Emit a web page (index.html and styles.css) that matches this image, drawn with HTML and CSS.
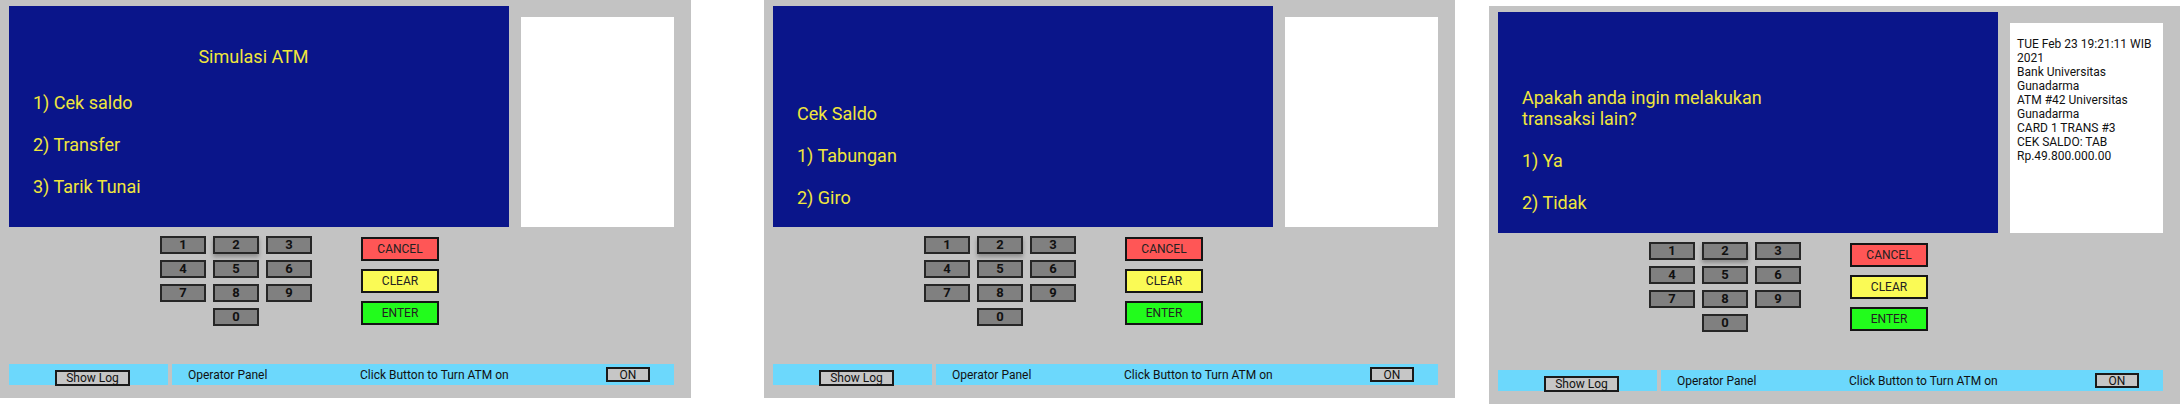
FILE: index.html
```html
<!DOCTYPE html>
<html lang="id">
<head>
<meta charset="utf-8">
<title>Simulasi ATM</title>
<link rel="stylesheet" href="styles.css">
</head>
<body>
<div class="row">

  <div class="atm">
    <div class="top">
      <div class="screen screen-welcome">
        <div class="title">Simulasi ATM</div>
        <div>1) Cek saldo</div>
        <div>2) Transfer</div>
        <div>3) Tarik Tunai</div>
      </div>
      <div class="receipt"></div>
    </div>
    <div class="controls">
      <div class="keypad">
        <button class="key key-hover">1</button><button class="key key-shadow">2</button><button class="key">3</button>
        <button class="key">4</button><button class="key">5</button><button class="key">6</button>
        <button class="key">7</button><button class="key">8</button><button class="key">9</button>
        <button class="key key-zero">0</button>
      </div>
      <div class="actions">
        <button class="act act-cancel">CANCEL</button>
        <button class="act act-clear">CLEAR</button>
        <button class="act act-enter">ENTER</button>
      </div>
    </div>
    <div class="bottom">
      <div class="logbar"><button class="small-btn log-btn">Show Log</button></div>
      <div class="opbar">
        <span class="op-label">Operator Panel</span>
        <span class="op-msg">Click Button to Turn ATM on</span>
        <button class="small-btn on-btn">ON</button>
      </div>
    </div>
  </div>

  <div class="atm atm-2">
    <div class="top">
      <div class="screen screen-saldo">
        <div>Cek Saldo</div>
        <div>1) Tabungan</div>
        <div>2) Giro</div>
      </div>
      <div class="receipt"></div>
    </div>
    <div class="controls">
      <div class="keypad">
        <button class="key key-hover">1</button><button class="key key-shadow">2</button><button class="key">3</button>
        <button class="key">4</button><button class="key">5</button><button class="key">6</button>
        <button class="key">7</button><button class="key">8</button><button class="key">9</button>
        <button class="key key-zero">0</button>
      </div>
      <div class="actions">
        <button class="act act-cancel">CANCEL</button>
        <button class="act act-clear">CLEAR</button>
        <button class="act act-enter">ENTER</button>
      </div>
    </div>
    <div class="bottom">
      <div class="logbar"><button class="small-btn log-btn">Show Log</button></div>
      <div class="opbar">
        <span class="op-label">Operator Panel</span>
        <span class="op-msg">Click Button to Turn ATM on</span>
        <button class="small-btn on-btn">ON</button>
      </div>
    </div>
  </div>

  <div class="atm atm-3">
    <div class="top">
      <div class="screen screen-again">
        <div class="question">Apakah anda ingin melakukan<br>transaksi lain?</div>
        <div>1) Ya</div>
        <div>2) Tidak</div>
      </div>
      <div class="receipt">
        <div>TUE Feb 23 19:21:11 WIB</div>
        <div>2021</div>
        <div>Bank Universitas</div>
        <div>Gunadarma</div>
        <div>ATM #42 Universitas</div>
        <div>Gunadarma</div>
        <div>CARD 1 TRANS #3</div>
        <div>CEK SALDO: TAB</div>
        <div>Rp.49.800.000.00</div>
      </div>
    </div>
    <div class="controls">
      <div class="keypad">
        <button class="key key-hover">1</button><button class="key key-shadow">2</button><button class="key">3</button>
        <button class="key">4</button><button class="key">5</button><button class="key">6</button>
        <button class="key">7</button><button class="key">8</button><button class="key">9</button>
        <button class="key key-zero">0</button>
      </div>
      <div class="actions">
        <button class="act act-cancel">CANCEL</button>
        <button class="act act-clear">CLEAR</button>
        <button class="act act-enter">ENTER</button>
      </div>
    </div>
    <div class="bottom">
      <div class="logbar"><button class="small-btn log-btn">Show Log</button></div>
      <div class="opbar">
        <span class="op-label">Operator Panel</span>
        <span class="op-msg">Click Button to Turn ATM on</span>
        <button class="small-btn on-btn">ON</button>
      </div>
    </div>
  </div>

</div>
</body>
</html>
```

FILE: styles.css
```css
* {
  box-sizing: border-box;
}

html,
body {
  margin: 0;
  padding: 0;
  background: #ffffff;
}

body {
  width: 2180px;
  height: 404px;
  overflow: hidden;
  font-family: Roboto, "Liberation Sans", sans-serif;
}

.row {
  display: flex;
  align-items: flex-start;
}

.atm {
  width: 691px;
  height: 398px;
  background: #c3c3c3;
  padding: 6px 17px 13px 9px;
  display: flex;
  flex-direction: column;
}

.atm-2 {
  margin-left: 73px;
}

.atm-3 {
  margin-left: 34px;
  margin-top: 6px;
}

.top {
  display: flex;
  align-items: flex-start;
  gap: 12px;
}

.screen {
  width: 500px;
  height: 221px;
  background: #0a158a;
  color: #f0e63c;
  font-size: 18px;
  line-height: 21px;
  padding-left: 24px;
  display: flex;
  flex-direction: column;
  gap: 21px;
}

.screen-welcome {
  padding-top: 40px;
}

.screen-welcome .title {
  text-align: center;
  padding-right: 35px;
  margin-bottom: 4px;
}

.screen-saldo {
  padding-top: 97px;
}

.screen-again {
  padding-top: 75px;
}

.receipt {
  width: 153px;
  height: 210px;
  margin-top: 11px;
  background: #ffffff;
  padding: 14px 0 0 7px;
  font-size: 12px;
  line-height: 14px;
  color: #111111;
}

.controls {
  display: flex;
  align-items: flex-start;
  margin-top: 9px;
  padding-left: 151px;
  gap: 49px;
}

.keypad {
  display: grid;
  grid-template-columns: repeat(3, 46px);
  grid-auto-rows: 18px;
  column-gap: 7px;
  row-gap: 6px;
}

button {
  font-family: inherit;
  margin: 0;
  padding: 0;
  cursor: default;
}

.key {
  background: #808080;
  border: 2px solid #262626;
  font-size: 13px;
  font-weight: 700;
  color: #111111;
  line-height: 14px;
}

.key-shadow {
  box-shadow: 0 3px 4px rgba(0, 0, 0, 0.28);
}

.key-zero {
  grid-column: 2;
}

.actions {
  display: flex;
  flex-direction: column;
  gap: 8px;
  margin-top: 1px;
}

.act {
  width: 78px;
  height: 24px;
  border: 2px solid #151515;
  font-size: 12px;
  color: #222222;
  line-height: 18px;
}

.act-cancel {
  background: #ff5656;
}

.act-clear {
  background: #fafa55;
}

.act-enter {
  background: #22fc1c;
}

.bottom {
  margin-top: auto;
  display: flex;
  gap: 4px;
  height: 21px;
}

.logbar {
  width: 159px;
  background: #6cd8fc;
  padding: 3px 0 0 46px;
}

.opbar {
  width: 502px;
  background: #6cd8fc;
  display: flex;
  align-items: center;
  padding-left: 16px;
  font-size: 12px;
  color: #111111;
}

.op-label {
  width: 172px;
}

.op-msg {
  width: 246px;
}

.small-btn {
  background: #c6c6c6;
  border: 2px solid #1a1a1a;
  font-size: 12px;
  color: #111111;
  line-height: 12px;
}

.log-btn {
  width: 75px;
  height: 16px;
}

.on-btn {
  width: 44px;
  height: 15px;
}
```
